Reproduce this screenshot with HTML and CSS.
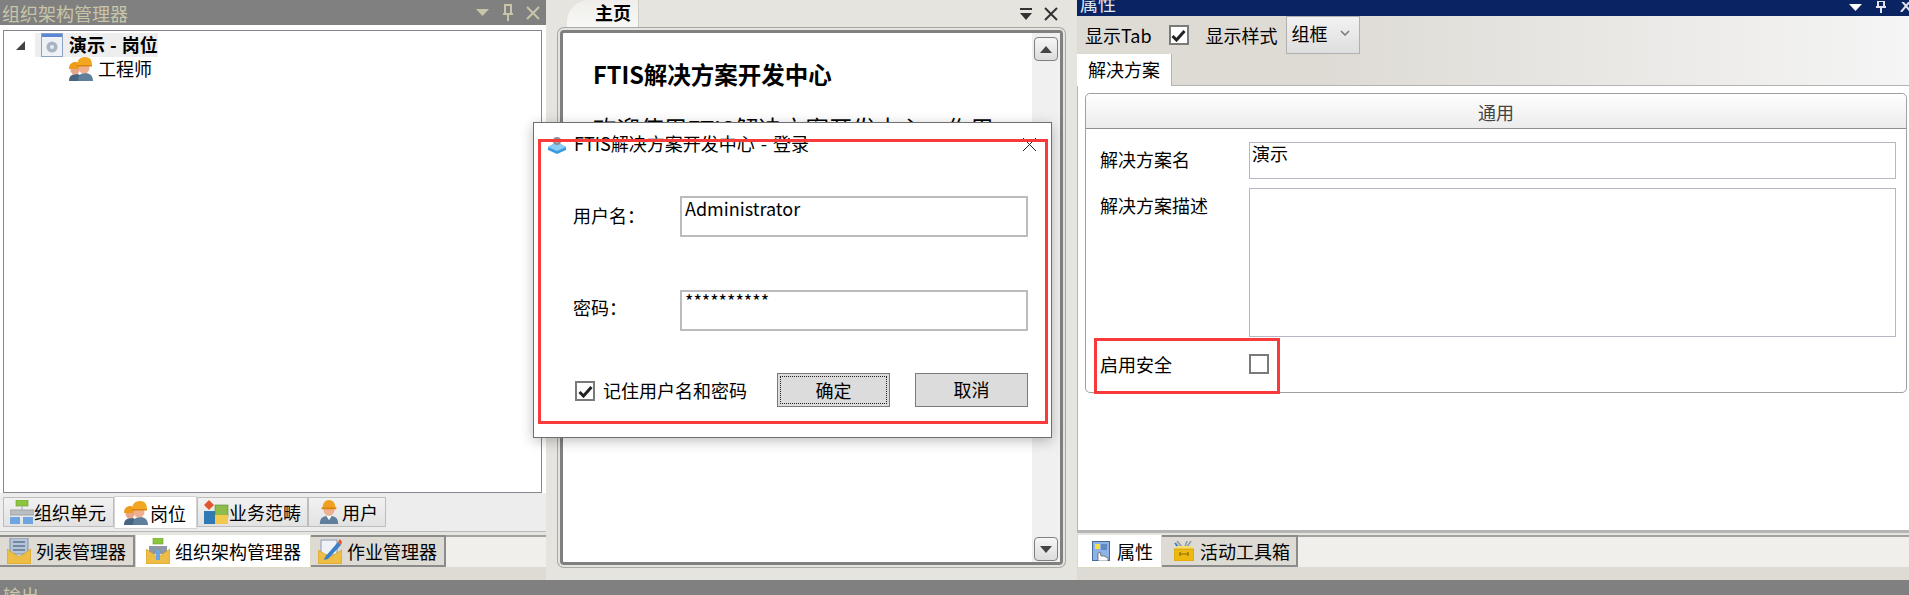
FILE: index.html
```html
<!DOCTYPE html>
<html lang="zh-CN">
  <head>
    <meta charset="UTF-8" />
    <title>FTIS解决方案开发中心</title>
    <link rel="stylesheet" href="styles.css">
  </head>
  <body>
    <!-- shared icons -->
    <svg class="sprites" width="0" height="0">
      <symbol id="i-window" viewBox="0 0 22 24">
        <rect x="0.5" y="0.5" width="21" height="23" fill="#eef1f6" stroke="#8ea3c4"/>
        <rect x="1" y="1" width="20" height="3" fill="#5b86d6"/>
        <circle cx="11" cy="14" r="5.5" fill="#a9b4c2"/>
        <circle cx="11" cy="14" r="2" fill="#e8edf3"/>
      </symbol>
      <symbol id="i-worker" viewBox="0 0 24 26">
        <path d="M2 26c0-7 4-9 10-9s10 2 10 9z" fill="#5f7f9c"/>
        <path d="M9 17l3 5 3-5z" fill="#fff"/>
        <circle cx="12" cy="11" r="6" fill="#f0b090"/>
        <path d="M5 9c0-6 3-9 7-9s7 3 7 9z" fill="#f0a020"/>
        <rect x="4" y="8" width="16" height="2" fill="#d9860f"/>
      </symbol>
      <symbol id="i-workers" viewBox="0 0 24 24">
        <path d="M0 24c0-5 3-7 7-7s7 2 7 7z" fill="#48657f"/>
        <path d="M9 24c0-6 3-8 7-8s8 2 8 8z" fill="#5f7f9c"/>
        <circle cx="6" cy="13" r="4.500" fill="#e8a58a"/>
        <path d="M0 12c0-5 3-7 6-7s6 2 6 7z" fill="#ee9a1a"/>
        <circle cx="15" cy="11" r="5.500" fill="#f0b090"/>
        <path d="M8 9c0-6 3-9 8-9s7 3 7 9z" fill="#f3a61f"/>
        <rect x="8" y="8" width="15" height="1.500" fill="#d9860f"/>
      </symbol>
      <symbol id="i-org" viewBox="0 0 24 24">
        <rect x="6" y="0" width="12" height="6" fill="#8cc63f" stroke="#6b9c2a" stroke-width="0.6"/>
        <path d="M12 6v4M0 10h24v5H0z" fill="#b9bcc0" stroke="#a2a5a9"/>
        <rect x="0" y="17" width="10" height="7" fill="#6ea4e0"/>
        <rect x="13" y="17" width="10" height="7" fill="#6ea4e0"/>
      </symbol>
      <symbol id="i-scope" viewBox="0 0 26 24">
        <rect x="1" y="11" width="13" height="13" fill="#2f79b5"/>
        <rect x="12" y="5" width="13" height="12" fill="#8dbb4c" stroke="#5d8a2c" stroke-width="0.6"/>
        <rect x="12" y="15" width="13" height="9" fill="#f2c94c"/>
        <path d="M6 0l5 5-5 5-5-5z" fill="#e2562f"/>
      </symbol>
      <symbol id="i-env-list" viewBox="0 0 24 26">
        <rect x="3" y="0" width="18" height="16" fill="#b7c4d6" stroke="#7f93ad"/>
        <path d="M6 4h12M6 8h12M6 12h12" stroke="#5d7592" stroke-width="1.5"/>
        <path d="M0 11l12 8 12-8v15H0z" fill="#edbd45" stroke="#c9982a" stroke-width="0.6"/>
      </symbol>
      <symbol id="i-env-org" viewBox="0 0 24 26">
        <rect x="7" y="0" width="10" height="6" fill="#8cc63f" stroke="#6b9c2a" stroke-width="0.6"/>
        <path d="M3 8h18v8H3z" fill="#8e99a8"/>
        <path d="M0 11l12 8 12-8v15H0z" fill="#edbd45" stroke="#c9982a" stroke-width="0.6"/>
        <rect x="10" y="12" width="4" height="10" fill="#6ea4e0"/>
      </symbol>
      <symbol id="i-env-edit" viewBox="0 0 24 26">
        <rect x="3" y="2" width="16" height="15" fill="#eef2f6" stroke="#8a9bb0"/>
        <path d="M0 12l12 7 12-7v14H0z" fill="#edbd45" stroke="#c9982a" stroke-width="0.6"/>
        <path d="M7 19l13-15 3 3-13 14-4 1z" fill="#3a80c9"/>
        <path d="M20 4l2-3 2 3-1 3z" fill="#e2562f"/>
      </symbol>
      <symbol id="i-props" viewBox="0 0 18 20">
        <rect x="0.5" y="0.5" width="17" height="19" fill="#8fb2e6" stroke="#466a9e"/>
        <rect x="3" y="3" width="5" height="5" fill="#f6e23a"/>
        <rect x="9" y="3" width="6" height="6" fill="#6289c2"/>
        <path d="M6 20v-8l2-1 1 4 3 0 4 2v3z" fill="#fff" stroke="#555" stroke-width="0.7"/>
      </symbol>
      <symbol id="i-toolbox" viewBox="0 0 20 20">
        <path d="M3 0l5 6M13 0l-2 6M17 0l-4 6" stroke="#8d9bab" stroke-width="1.6"/>
        <path d="M1 2l4 5" stroke="#3a80c9" stroke-width="2"/>
        <path d="M0 8l3-3h14l3 3z" fill="#f7dc6f"/>
        <rect x="0" y="8" width="20" height="12" fill="#eeb90f" stroke="#c4940a" stroke-width="0.6"/>
        <path d="M6 13h8M6 11v4M14 11v4" stroke="#8c6a07" stroke-width="1.2" fill="none"/>
      </symbol>
      <symbol id="i-app" viewBox="0 0 18 18">
        <path d="M0 11l9-5 9 5v3l-9 4-9-4z" fill="#3a9be0"/>
        <path d="M0 11l9-5 9 5-9 4z" fill="#8dcdf5"/>
        <circle cx="9" cy="5" r="4" fill="#8a8f96"/>
        <circle cx="9" cy="5" r="1.5" fill="#eee"/>
      </symbol>
    </svg>

    <div class="workspace">
      <!-- left dock -->
      <section class="left-dock">
        <header class="pane-title">
          <span>组织架构管理器</span>
          <span class="pane-tools">
            <svg width="14" height="8" viewBox="0 0 14 8"><path d="M0 0h13L6.500 7z" fill="currentColor"/></svg>
            <svg width="12" height="18" viewBox="0 0 12 18"><path d="M3 1h6v9H3zM1 10h10M6 10v7" fill="none" stroke="currentColor" stroke-width="2"/></svg>
            <svg width="14" height="14" viewBox="0 0 14 14"><path d="M1 1l12 12M13 1L1 13" stroke="currentColor" stroke-width="2"/></svg>
          </span>
        </header>
        <div class="tree-wrap">
          <div class="tree">
            <div class="tree-root">
              <svg class="tree-arrow" width="9" height="9" viewBox="0 0 9 9"><path d="M9 0v9H0z" fill="#444"/></svg>
              <span class="tree-selected">
                <svg width="22" height="24"><use href="#i-window"/></svg>
                <b>演示 - 岗位</b>
              </span>
            </div>
            <div class="tree-child">
              <svg width="24" height="24"><use href="#i-workers"/></svg>
              <span>工程师</span>
            </div>
          </div>
        </div>
        <nav class="sub-tabs">
          <a class="sub-tab"><svg width="24" height="24"><use href="#i-org"/></svg>组织单元</a>
          <a class="sub-tab active"><svg width="24" height="24"><use href="#i-workers"/></svg>岗位</a>
          <a class="sub-tab"><svg width="26" height="24"><use href="#i-scope"/></svg>业务范畴</a>
          <a class="sub-tab"><svg width="22" height="24"><use href="#i-worker"/></svg>用户</a>
        </nav>
        <nav class="dock-tabs">
          <a class="dock-tab"><svg width="24" height="26"><use href="#i-env-list"/></svg>列表管理器</a>
          <a class="dock-tab active"><svg width="24" height="26"><use href="#i-env-org"/></svg>组织架构管理器</a>
          <a class="dock-tab"><svg width="24" height="26"><use href="#i-env-edit"/></svg>作业管理器</a>
        </nav>
      </section>

      <!-- center document -->
      <section class="center-dock">
        <div class="doc-tabs">
          <span class="doc-tab">主页</span>
          <span class="doc-tools">
            <svg width="14" height="14" viewBox="0 0 14 14"><path d="M1 1h12v2H1zM1 6h12L7 13z" fill="#333"/></svg>
            <svg width="14" height="14" viewBox="0 0 14 14"><path d="M1 1l12 12M13 1L1 13" stroke="#333" stroke-width="2"/></svg>
          </span>
        </div>
        <div class="doc-frame">
          <div class="doc-page">
            <h1>FTIS解决方案开发中心</h1>
            <p>欢迎使用FTIS解决方案开发中心，作用</p>
          </div>
          <div class="scrollbar">
            <span class="scroll-btn"><svg width="12" height="7" viewBox="0 0 12 7"><path d="M0 7h12L6 0z" fill="#444"/></svg></span>
            <span class="scroll-btn"><svg width="12" height="7" viewBox="0 0 12 7"><path d="M0 0h12L6 7z" fill="#444"/></svg></span>
          </div>
        </div>
      </section>

      <!-- right dock -->
      <section class="right-dock">
        <header class="prop-title">
          <span>属性</span>
          <span class="pane-tools">
            <svg width="13" height="7" viewBox="0 0 13 7"><path d="M0 0h13L6.500 7z" fill="#fff"/></svg>
            <svg width="10" height="12" viewBox="0 0 10 12"><path d="M2 0h6v6H2zM0 6h10M5 6v6" fill="none" stroke="#dfe4ee" stroke-width="2"/></svg>
            <svg width="12" height="10" viewBox="0 0 12 10"><path d="M1 -2l10 12M11 -2L1 10" stroke="#dfe4ee" stroke-width="2"/></svg>
          </span>
        </header>
        <div class="prop-head">
          <div class="prop-toolbar">
            <span>显示Tab</span>
            <span class="check checked toolbar-check"><svg width="15" height="13" viewBox="0 0 15 13"><path d="M1.500 7l4 4 8-9" fill="none" stroke="#222" stroke-width="3"/></svg></span>
            <span>显示样式</span>
            <span class="combo">组框<svg width="10" height="6" viewBox="0 0 10 6"><path d="M1 1l4 4 4-4" fill="none" stroke="#777" stroke-width="1.500"/></svg></span>
          </div>
          <div class="prop-tabs"><span class="prop-tab">解决方案</span></div>
        </div>
        <div class="prop-body">
          <div class="group">
            <div class="group-head">通用</div>
            <div class="group-row row-name">
              <label>解决方案名</label>
              <div class="text-box">演示</div>
            </div>
            <div class="group-row row-desc">
              <label>解决方案描述</label>
              <div class="text-box"></div>
            </div>
            <div class="group-row row-secure">
              <label>启用安全</label>
              <span class="check"></span>
            </div>
            <span class="mark mark-secure"></span>
          </div>
        </div>
        <nav class="dock-tabs prop-dock">
          <a class="dock-tab active"><svg width="18" height="20"><use href="#i-props"/></svg>属性</a>
          <a class="dock-tab"><svg width="20" height="20"><use href="#i-toolbox"/></svg>活动工具箱</a>
        </nav>
      </section>
    </div>

    <footer class="output-title">输出</footer>

    <!-- login dialog, sits over the document -->
    <div class="dialog">
      <div class="dialog-title">
        <svg width="18" height="18"><use href="#i-app"/></svg>
        <span class="dialog-name">FTIS解决方案开发中心 - 登录</span>
        <svg class="dialog-close" width="15" height="15" viewBox="0 0 15 15"><path d="M1 1l13 13M14 1L1 14" stroke="#222" stroke-width="1"/></svg>
      </div>
      <div class="field">
        <label>用户名：</label>
        <div class="field-box">Administrator</div>
      </div>
      <div class="field field-pass">
        <label>密码：</label>
        <div class="field-box">**********</div>
      </div>
      <div class="dialog-actions">
        <span class="check checked"><svg width="15" height="13" viewBox="0 0 15 13"><path d="M1.500 7l4 4 8-9" fill="none" stroke="#222" stroke-width="3"/></svg></span>
        <span class="remember">记住用户名和密码</span>
        <button class="btn focused"><span>确定</span></button>
        <button class="btn"><span>取消</span></button>
      </div>
      <span class="mark mark-dialog"></span>
    </div>
  </body>
</html>
```

FILE: styles.css
```css
* {
  box-sizing: border-box;
}
body {
  margin: 0;
  width: 1909px;
  height: 595px;
  overflow: hidden;
  position: relative;
  font-family: "Noto Sans CJK SC", "Noto Sans", sans-serif;
  font-size: 18px;
  line-height: 24px;
  color: #000;
  background: #e6e4df;
}
.sprites {
  position: absolute;
}
svg {
  flex: none;
  display: block;
}
.workspace {
  display: grid;
  grid-template-columns: 546px 531px 832px;
  height: 580px;
}

/* left dock */
.left-dock {
  display: flex;
  flex-direction: column;
  height: 580px;
}
.pane-title {
  display: flex;
  justify-content: space-between;
  align-items: center;
  height: 25px;
  padding: 0 6px 0 2px;
  background: #808080;
  color: #c8c5a9;
}
.pane-tools {
  display: flex;
  align-items: center;
  gap: 12px;
}
.tree-wrap {
  height: 468px;
  padding: 5px 4px 0 3px;
  background: #fff;
}
.tree {
  height: 100%;
  border: 1px solid #828790;
  background: #fff;
}
.tree-root {
  display: flex;
  align-items: center;
  height: 24px;
  margin-top: 2px;
  padding-left: 12px;
}
.tree-arrow {
  margin-right: 10px;
}
.tree-selected {
  display: flex;
  align-items: center;
  gap: 6px;
  padding-left: 6px;
  background: #eeeeee;
}
.tree-selected b {
  margin-top: -2px;
  word-spacing: 1px;
}
.tree-child {
  display: flex;
  align-items: center;
  gap: 5px;
  height: 23px;
  padding-left: 65px;
}
.tree-child span {
  margin-top: -2px;
}
.sub-tabs {
  display: flex;
  align-items: flex-start;
  height: 39px;
  padding: 4px 0 0 3px;
  background: #ededed;
  border-bottom: 1px solid #b8b8b8;
}
.sub-tab {
  display: flex;
  align-items: center;
  height: 30px;
  padding: 0 6px;
  background: linear-gradient(#f2f2f2, #e2e2e2);
  border: 1px solid #bdbdbd;
}
.sub-tab:nth-child(1) {
  width: 111px;
}
.sub-tab:nth-child(2) {
  width: 83px;
  padding-left: 9px;
}
.sub-tab:nth-child(3) {
  width: 111px;
  padding-left: 5px;
}
.sub-tab:nth-child(4) {
  width: 78px;
  padding-left: 9px;
}
.sub-tab:nth-child(2) svg,
.sub-tab:nth-child(4) svg {
  margin-right: 2px;
}
.sub-tab.active {
  height: 33px;
  margin-top: -1px;
  background: #fff;
  border-color: #d4d4d4;
}
.dock-tabs {
  display: flex;
  height: 45px;
  margin-top: 3px;
  padding-bottom: 13px;
  background: linear-gradient(#f0efec 32px, #dedbd5 32px);
  box-shadow: inset 0 2px 0 #a3a3a3;
}
.dock-tab {
  display: flex;
  align-items: center;
  gap: 5px;
  height: 32px;
  padding: 0 7px;
  background: #dedbd4;
  border: 2px solid #8c8c8c;
  border-left: 0;
}
.dock-tab.active {
  height: 33px;
  padding: 0 9px 0 10px;
  background: #fff;
  border: 1px solid #dcd9c4;
  border-top: 0;
}

/* center document */
.center-dock {
  display: flex;
  flex-direction: column;
  padding: 0 14px 0 14px;
  height: 580px;
}
.doc-tabs {
  display: flex;
  justify-content: space-between;
  align-items: center;
  height: 27px;
  margin-bottom: 3px;
}
.doc-tab {
  margin-left: 7px;
  width: 72px;
  height: 27px;
  padding-left: 28px;
  font-weight: 700;
  background: linear-gradient(#efeeea, #f8f8f6);
  border-radius: 22px 0 0 0;
  border-right: 1px solid #cfcdc8;
}
.doc-tools {
  display: flex;
  align-items: center;
  gap: 11px;
  padding-right: 5px;
}
.doc-frame {
  display: flex;
  height: 535px;
  border: 3px solid #808080;
  border-radius: 4px;
  box-shadow: 0 0 0 2px #e6e4df, 0 0 0 3px #a8a8a8;
  background: #fff;
}
.doc-page {
  flex: 1;
  padding: 24px 0 0 30px;
  overflow: hidden;
}
.doc-page h1 {
  margin: 0;
  font-size: 23.5px;
  line-height: 34px;
  font-weight: 700;
}
.doc-page p {
  margin: 20px 0 0;
  font-size: 23.5px;
  line-height: 34px;
  white-space: nowrap;
}
.scrollbar {
  display: flex;
  flex-direction: column;
  justify-content: space-between;
  align-items: center;
  width: 28px;
  padding: 4px 0 1px;
  background: #f0f0f0;
}
.scroll-btn {
  display: flex;
  justify-content: center;
  align-items: center;
  width: 24px;
  height: 24px;
  background: linear-gradient(#f6f6f6, #dcdcdc);
  border: 1px solid #808080;
  border-radius: 4px;
}

/* right dock */
.right-dock {
  display: flex;
  flex-direction: column;
  height: 580px;
}
.prop-title {
  display: flex;
  justify-content: space-between;
  align-items: flex-start;
  height: 16px;
  padding: 0 0 0 3px;
  overflow: hidden;
  background: #0a2463;
  color: #e4e8f0;
  line-height: 6px;
}
.prop-title .pane-tools {
  gap: 14px;
  padding-top: 1px;
  margin-right: -3px;
}
.prop-head {
  height: 70px;
  background: linear-gradient(90deg, #dedbd5 0%, #dedbd5 30%, #f5f5f5 100%);
}
.prop-toolbar {
  display: flex;
  align-items: flex-start;
  height: 38px;
  padding-left: 8px;
}
.prop-toolbar > span {
  margin-top: 7px;
}
.check {
  display: flex;
  justify-content: center;
  align-items: center;
  width: 20px;
  height: 20px;
  background: #fff;
  border: 2px solid #7a7a7a;
}
.prop-toolbar .toolbar-check {
  margin: 9px 17px 0;
}
.prop-toolbar .combo {
  display: flex;
  justify-content: space-between;
  align-items: center;
  width: 74px;
  height: 38px;
  margin: 0 0 0 8px;
  padding: 0 9px 4px 5px;
  background: linear-gradient(#f2f2f2, #dedede);
  border: 1px solid #b0b0b0;
}
.prop-tabs {
  height: 32px;
  border-bottom: 1px solid #b4b4b4;
}
.prop-tab {
  display: block;
  width: 95px;
  height: 32px;
  padding: 3px 0 0 11px;
  background: #fff;
  border-right: 1px solid #b4b4b4;
}
.prop-body {
  height: 447px;
  padding: 7px 2px 0 7px;
  background: #fff;
  border-left: 1px solid #b5b5b5;
  border-bottom: 3px solid #b5b5b5;
}
.group {
  position: relative;
  height: 300px;
  border: 1px solid #a0a0a0;
  border-radius: 5px;
}
.group-head {
  height: 35px;
  line-height: 36px;
  text-align: center;
  color: #444;
  background: linear-gradient(#fefefe, #ececec);
  border-bottom: 1px solid #8e8e8e;
  border-radius: 5px 5px 0 0;
}
.group-row {
  display: grid;
  grid-template-columns: 149px 647px;
  padding-left: 14px;
}
.text-box {
  padding-left: 2px;
  line-height: 20px;
  border: 1px solid #b5b8c4;
}
.row-name {
  height: 37px;
  margin-top: 13px;
}
.row-desc {
  height: 149px;
  margin-top: 9px;
}
.row-desc label,
.row-name label {
  margin-top: 5px;
}
.row-secure {
  align-items: center;
  height: 54px;
}
.prop-dock {
  margin-top: 2px;
}
.prop-dock .dock-tab {
  padding: 0 6px 0 12px;
  gap: 6px;
}
.prop-dock .dock-tab.active {
  padding: 0 8px 0 14px;
  gap: 7px;
}

/* output bar */
.output-title {
  height: 15px;
  padding: 3px 0 0 3px;
  overflow: hidden;
  background: #808080;
  color: #c8c5a9;
}

/* login dialog */
.dialog {
  position: absolute;
  left: 533px;
  top: 122px;
  width: 519px;
  height: 316px;
  padding: 0 23px 0 39px;
  background: #fff;
  border: 1px solid #6f6f6f;
  box-shadow: 0 3px 12px rgba(0, 0, 0, 0.25);
}
.dialog-title {
  display: flex;
  align-items: center;
  height: 43px;
  margin-left: -25px;
  margin-right: -9px;
  gap: 8px;
}
.dialog-name {
  margin-bottom: 4px;
  word-spacing: 2px;
}
.dialog-close {
  margin-left: auto;
}
.field {
  display: grid;
  grid-template-columns: 107px 1fr;
  align-items: center;
  height: 41px;
  margin-top: 30px;
}
.field label {
  margin-bottom: 4px;
}
.field-box {
  height: 41px;
  padding-left: 3px;
  line-height: 20px;
  border: 2px solid #bcbcc0;
}
.field-pass {
  margin-top: 53px;
}
.field-pass label {
  margin-bottom: 8px;
}
.field-pass .field-box {
  line-height: 17px;
}
.dialog-actions {
  display: flex;
  align-items: center;
  height: 34px;
  margin-top: 42px;
}
.dialog-actions .check {
  margin: 2px 0 0 2px;
}
.remember {
  flex: none;
  margin-left: 8px;
  white-space: nowrap;
}
.btn {
  flex: none;
  width: 113px;
  height: 34px;
  margin-left: 25px;
  padding: 2px;
  font: inherit;
  color: #000;
  background: #dcdcdc;
  border: 1px solid #7a7a7a;
}
.btn span {
  display: block;
  height: 100%;
  line-height: 26px;
}
.btn.focused {
  margin-left: 30px;
}
.btn.focused span {
  border: 1px dotted #222;
}

/* red annotation boxes */
.mark {
  position: absolute;
  border: 3px solid #f93a3a;
  pointer-events: none;
}
.mark-dialog {
  left: 4px;
  top: 16px;
  width: 510px;
  height: 285px;
}
.mark-secure {
  left: 8px;
  top: 244px;
  width: 186px;
  height: 56px;
}
```
